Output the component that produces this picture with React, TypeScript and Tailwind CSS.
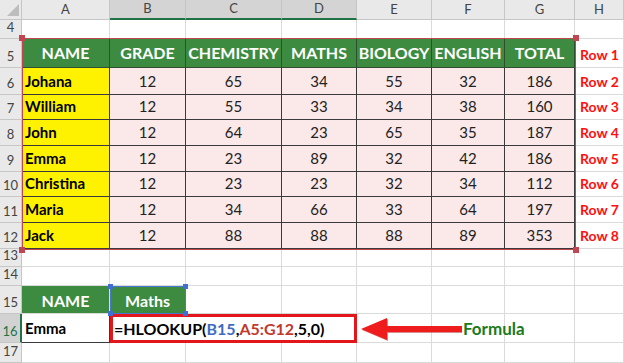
import React from 'react';

const students: [string, number, number, number, number, number, number][] = [
  ['Johana', 12, 65, 34, 55, 32, 186],
  ['William', 12, 55, 33, 34, 38, 160],
  ['John', 12, 64, 23, 65, 35, 187],
  ['Emma', 12, 23, 89, 32, 42, 186],
  ['Christina', 12, 23, 23, 32, 34, 112],
  ['Maria', 12, 34, 66, 33, 64, 197],
  ['Jack', 12, 88, 88, 88, 89, 353],
];

const headers = ['NAME', 'GRADE', 'CHEMISTRY', 'MATHS', 'BIOLOGY', 'ENGLISH', 'TOTAL'];
const letters = ['A', 'B', 'C', 'D', 'E', 'F', 'G', 'H'];

function RowNum({ n, active }: { n: number; active?: boolean }) {
  return (
    <div
      className={
        active
          ? 'flex items-end justify-center pb-[1px] bg-[#d2d2d2] border-b border-r-2 border-b-[#c6c6c6] border-r-[#217346] text-[#217346] text-[13px]'
          : 'flex items-end justify-center pb-[1px] bg-[#e9e9e9] border-b border-r border-[#c6c6c6] text-[#444] text-[13px]'
      }
    >
      {n}
    </div>
  );
}

function Blank() {
  return <div className="border-b border-r border-[#dadada] bg-white" />;
}

export default function App() {
  return (
    <div className="relative w-[624px] h-[363px] overflow-hidden bg-white font-[Lato,sans-serif]">
      <div className="grid grid-cols-[22px_88px_76px_96px_75px_75px_73px_70px_49px] grid-rows-[20px_19px_29px_27px_25px_26px_26px_25px_26px_26px_18px_19px_28px_29px_20px]">
        {/* column letters */}
        <div className="relative bg-[#e9e9e9] border-b border-r border-[#c6c6c6]">
          <div className="absolute right-[2px] bottom-[3px] w-0 h-0 border-l-[12px] border-l-transparent border-b-[12px] border-b-[#bdbdbd]" />
        </div>
        {letters.map((l) => {
          const hi = l === 'B' || l === 'C' || l === 'D';
          return (
            <div
              key={l}
              className={
                hi
                  ? 'flex items-center justify-center bg-[#d4d4d4] border-r border-[#c6c6c6] border-b-2 border-b-[#217346] text-[13px] text-[#444]'
                  : 'flex items-center justify-center bg-[#e9e9e9] border-r border-b border-[#c6c6c6] text-[13px] text-[#444]'
              }
            >
              {l}
            </div>
          );
        })}

        {/* row 4 */}
        <RowNum n={4} />
        {letters.map((l) => (
          <Blank key={l} />
        ))}

        {/* row 5 headers */}
        <RowNum n={5} />
        {headers.map((h) => (
          <div
            key={h}
            className="flex items-center justify-center bg-[#3d8b41] border-r border-b border-[#2f4f30] text-white font-bold text-[16px]"
          >
            {h}
          </div>
        ))}
        <div className="flex items-end pl-[5px] pb-[2px] border-b border-r border-[#dadada] text-[#ff1010] font-bold text-[14px]">
          Row 1
        </div>

        {/* data rows */}
        {students.map((s, i) => (
          <React.Fragment key={s[0]}>
            <RowNum n={6 + i} />
            <div className="flex items-end pl-[3px] pb-[2px] bg-[#fff200] border-r border-b border-[#3a3a3a] text-black font-bold text-[15px]">
              {s[0]}
            </div>
            {s.slice(1).map((v, j) => (
              <div
                key={j}
                className="flex items-end justify-center pb-[2px] bg-[#fbe9e9] border-r border-b border-[#3a3a3a] text-[#222] text-[15px]"
              >
                {v}
              </div>
            ))}
            <div className="flex items-end pl-[5px] pb-[2px] border-b border-r border-[#dadada] text-[#ff1010] font-bold text-[14px]">
              Row {i + 2}
            </div>
          </React.Fragment>
        ))}

        {/* rows 13, 14 */}
        <RowNum n={13} />
        {letters.map((l) => (
          <Blank key={l} />
        ))}
        <RowNum n={14} />
        {letters.map((l) => (
          <Blank key={l} />
        ))}

        {/* row 15 lookup headers */}
        <RowNum n={15} />
        <div className="flex items-center justify-center pt-[2px] bg-[#3d8b41] border-r border-b border-[#dadada] text-white font-bold text-[16px]">
          NAME
        </div>
        <div className="flex items-center justify-center pt-[2px] bg-[#3d8b41] border-r border-b border-[#dadada] text-white font-bold text-[16px]">
          Maths
        </div>
        {letters.slice(2).map((l) => (
          <Blank key={l} />
        ))}

        {/* row 16 formula */}
        <RowNum n={16} active />
        <div className="flex items-end pl-[3px] pb-[3px] border-r border-b border-[#3a3a3a] text-black font-bold text-[15px]">
          Emma
        </div>
        <div className="col-span-3 flex items-center pl-[1px] border-[3px] border-[#e3161b] bg-white shadow-[2px_2px_3px_rgba(0,0,0,0.35)] text-black font-bold text-[16px] whitespace-nowrap">
          =HLOOKUP(<span className="text-[#3d6cc0]">B15</span>,<span className="text-[#c0392b]">A5:G12</span>,5,0)
        </div>
        {letters.slice(4).map((l) => (
          <Blank key={l} />
        ))}

        {/* row 17 */}
        <RowNum n={17} />
        {letters.map((l) => (
          <Blank key={l} />
        ))}
      </div>

      {/* reference highlight A5:G12 */}
      <div className="absolute left-[22px] top-[38px] w-[554px] h-[212px] border-[1.5px] border-[#c0464f] pointer-events-none">
        <span className="absolute -left-[4px] -top-[4px] w-[6px] h-[6px] bg-[#c0464f]" />
        <span className="absolute -right-[4px] -top-[4px] w-[6px] h-[6px] bg-[#c0464f]" />
        <span className="absolute -right-[4px] -bottom-[4px] w-[6px] h-[6px] bg-[#c0464f]" />
        <span className="absolute -left-[4px] -bottom-[4px] w-[6px] h-[6px] bg-[#c0464f]" />
      </div>

      {/* reference highlight B15 */}
      <div className="absolute left-[110px] top-[286px] w-[76px] h-[28px] border border-[#4a78d0] pointer-events-none">
        <span className="absolute -left-[3px] -top-[3px] w-[5px] h-[5px] bg-[#3f6fd0]" />
        <span className="absolute -right-[3px] -top-[3px] w-[5px] h-[5px] bg-[#3f6fd0]" />
        <span className="absolute -right-[3px] -bottom-[3px] w-[5px] h-[5px] bg-[#3f6fd0]" />
        <span className="absolute -left-[3px] -bottom-[3px] w-[5px] h-[5px] bg-[#3f6fd0]" />
      </div>

      {/* arrow annotation */}
      <div className="absolute left-[360px] top-[316px] flex items-center">
        <svg width="102" height="26" viewBox="0 0 102 26">
          <polygon points="1,13 27,2 27,10 102,10 102,16 27,16 27,24" fill="#b01818" transform="translate(1,1)" opacity="0.5" />
          <polygon points="1,13 27,2 27,10 102,10 102,16 27,16 27,24" fill="#ee1c1c" />
        </svg>
        <span className="ml-[1px] text-[#1b7a1b] font-bold text-[17px]">Formula</span>
      </div>
    </div>
  );
}
